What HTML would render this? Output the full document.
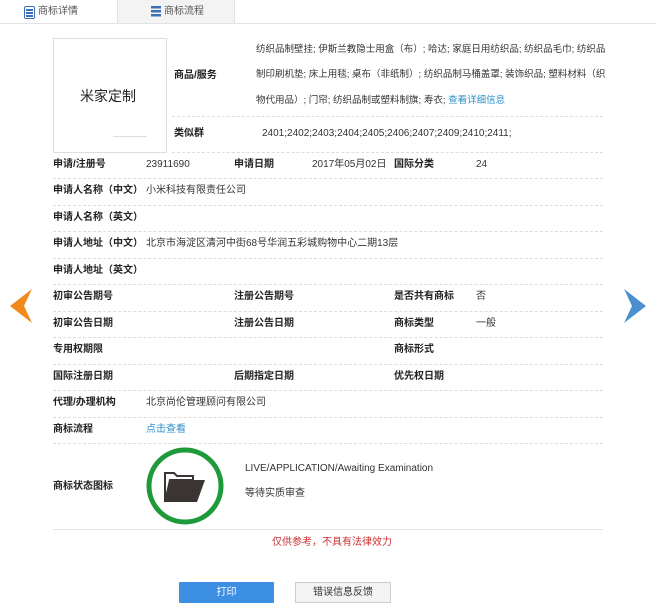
<!DOCTYPE html>
<html><head><meta charset="utf-8"><style>
*{margin:0;padding:0;box-sizing:border-box}
body{width:656px;height:615px;background:#fff;position:relative;overflow:hidden;font-family:"Liberation Sans","Noto Sans CJK SC",sans-serif;font-size:10px;color:#333}
.a{position:absolute;white-space:nowrap;line-height:12px}
.b{font-weight:bold;color:#222}
.l{position:absolute;left:53px;width:550px;border-top:1px dashed #ddd;height:0}
.lk{color:#2a8fc9}
</style></head><body>
<div style="position:absolute;left:0;top:0;width:656px;height:24px;border-bottom:1px solid #e2e2e2;background:#fff"></div>
<div style="position:absolute;left:117px;top:0;width:118px;height:24px;background:#f3f3f3;border-left:1px solid #e2e2e2;border-right:1px solid #e2e2e2;border-bottom:1px solid #e2e2e2"></div>
<div style="position:absolute;left:24px;top:6px;width:11px;height:13px;border:1.5px solid #3a6fb5;border-radius:2px;background:#fff;padding-top:1px"><div style="margin:1px 1px;height:1.5px;background:#3a6fb5"></div><div style="margin:1.5px 1px;height:1.5px;background:#3a6fb5"></div><div style="margin:1.5px 1px;height:1.5px;background:#3a6fb5"></div></div>
<div class="a" style="left:38px;top:6px;color:#555">商标详情</div>
<div style="position:absolute;left:151px;top:6px;width:10px;height:11px;background:repeating-linear-gradient(#3a6fb5 0 2.5px,#f3f3f3 2.5px 4px)"></div>
<div class="a" style="left:164px;top:6px;color:#555">商标流程</div>

<div style="position:absolute;left:53px;top:38px;width:114px;height:115px;border:1px solid #ddd"></div>
<div class="a" style="left:80px;top:88px;font-size:14px;line-height:16px;color:#222">米家定制</div>
<div style="position:absolute;left:113px;top:136px;width:34px;border-top:1px solid #ddd"></div>
<div class="a b" style="left:174px;top:70px">商品/服务</div>
<div class="a" style="left:256px;top:44px;font-size:9.5px">纺织品制壁挂; 伊斯兰教隐士用盒（布）; 哈达; 家庭日用纺织品; 纺织品毛巾; 纺织品</div>
<div class="a" style="left:256px;top:69px;font-size:9.5px">制印刷机垫; 床上用毯; 桌布（非纸制）; 纺织品制马桶盖罩; 装饰织品; 塑料材料（织</div>
<div class="a" style="left:256px;top:95px;font-size:9.5px">物代用品）; 门帘; 纺织品制或塑料制旗; 寿衣; <span class="lk">查看详细信息</span></div>
<div style="position:absolute;left:172px;top:116px;width:431px;border-top:1px dashed #ddd"></div>
<div class="a b" style="left:174px;top:128px">类似群</div>
<div class="a" style="left:262px;top:128px">2401;2402;2403;2404;2405;2406;2407;2409;2410;2411;</div>
<div style="position:absolute;left:172px;top:152px;width:431px;border-top:1px dashed #ddd"></div>

<div class="a b" style="left:53px;top:159px">申请/注册号</div><div class="a" style="left:146px;top:159px">23911690</div>
<div class="a b" style="left:234px;top:159px">申请日期</div><div class="a" style="left:312px;top:159px">2017年05月02日</div>
<div class="a b" style="left:394px;top:159px">国际分类</div><div class="a" style="left:476px;top:159px">24</div>
<div class="l" style="top:178px"></div>
<div class="a b" style="left:53px;top:185px">申请人名称（中文）</div><div class="a" style="left:146px;top:185px">小米科技有限责任公司</div>
<div class="l" style="top:205px"></div>
<div class="a b" style="left:53px;top:212px">申请人名称（英文）</div>
<div class="l" style="top:231px"></div>
<div class="a b" style="left:53px;top:238px">申请人地址（中文）</div><div class="a" style="left:146px;top:238px">北京市海淀区清河中街68号华润五彩城购物中心二期13层</div>
<div class="l" style="top:258px"></div>
<div class="a b" style="left:53px;top:265px">申请人地址（英文）</div>
<div class="l" style="top:284px"></div>
<div class="a b" style="left:53px;top:291px">初审公告期号</div>
<div class="a b" style="left:234px;top:291px">注册公告期号</div>
<div class="a b" style="left:394px;top:291px">是否共有商标</div><div class="a" style="left:476px;top:291px">否</div>
<div class="l" style="top:311px"></div>
<div class="a b" style="left:53px;top:318px">初审公告日期</div>
<div class="a b" style="left:234px;top:318px">注册公告日期</div>
<div class="a b" style="left:394px;top:318px">商标类型</div><div class="a" style="left:476px;top:318px">一般</div>
<div class="l" style="top:337px"></div>
<div class="a b" style="left:53px;top:344px">专用权期限</div>
<div class="a b" style="left:394px;top:344px">商标形式</div>
<div class="l" style="top:364px"></div>
<div class="a b" style="left:53px;top:371px">国际注册日期</div>
<div class="a b" style="left:234px;top:371px">后期指定日期</div>
<div class="a b" style="left:394px;top:371px">优先权日期</div>
<div class="l" style="top:390px"></div>
<div class="a b" style="left:53px;top:397px">代理/办理机构</div><div class="a" style="left:146px;top:397px">北京尚伦管理顾问有限公司</div>
<div class="l" style="top:417px"></div>
<div class="a b" style="left:53px;top:424px">商标流程</div><div class="a lk" style="left:146px;top:424px">点击查看</div>
<div class="l" style="top:443px"></div>
<div class="a b" style="left:53px;top:481px">商标状态图标</div>
<svg style="position:absolute;left:145px;top:446px" width="80" height="80" viewBox="0 0 80 80">
<circle cx="40" cy="40" r="36" fill="#fff" stroke="#1e9a3a" stroke-width="5"/>
<path d="M20 56 L20 27 L29 27 L32 30 L48 30 L48 34 L25 34 Z" fill="#fff" stroke="#3a3432" stroke-width="2"/>
<path d="M20 56 L26 34 L60 34 L52 56 Z" fill="#3a3432"/>
</svg>
<div class="a" style="left:245px;top:463px">LIVE/APPLICATION/Awaiting Examination</div>
<div class="a" style="left:245px;top:488px">等待实质审查</div>
<div class="l" style="top:529px;border-top:1px solid #e2e2e2"></div>
<div class="a" style="left:272px;top:537px;color:#c83030">仅供参考，不具有法律效力</div>
<div style="position:absolute;left:179px;top:582px;width:95px;height:21px;background:#3d8fe4;color:#fff;text-align:center;line-height:21px;border-radius:1px">打印</div>
<div style="position:absolute;left:295px;top:582px;width:96px;height:21px;background:#f3f3f3;border:1px solid #ccc;color:#333;text-align:center;line-height:19px">错误信息反馈</div>
<svg style="position:absolute;left:8px;top:289px" width="26" height="34"><path d="M24 0 L2 17 L24 34 L16 17 Z" fill="#f08a1c"/></svg>
<svg style="position:absolute;left:622px;top:289px" width="26" height="34"><path d="M2 0 L24 17 L2 34 L10 17 Z" fill="#4a90d0"/></svg>
</body></html>
